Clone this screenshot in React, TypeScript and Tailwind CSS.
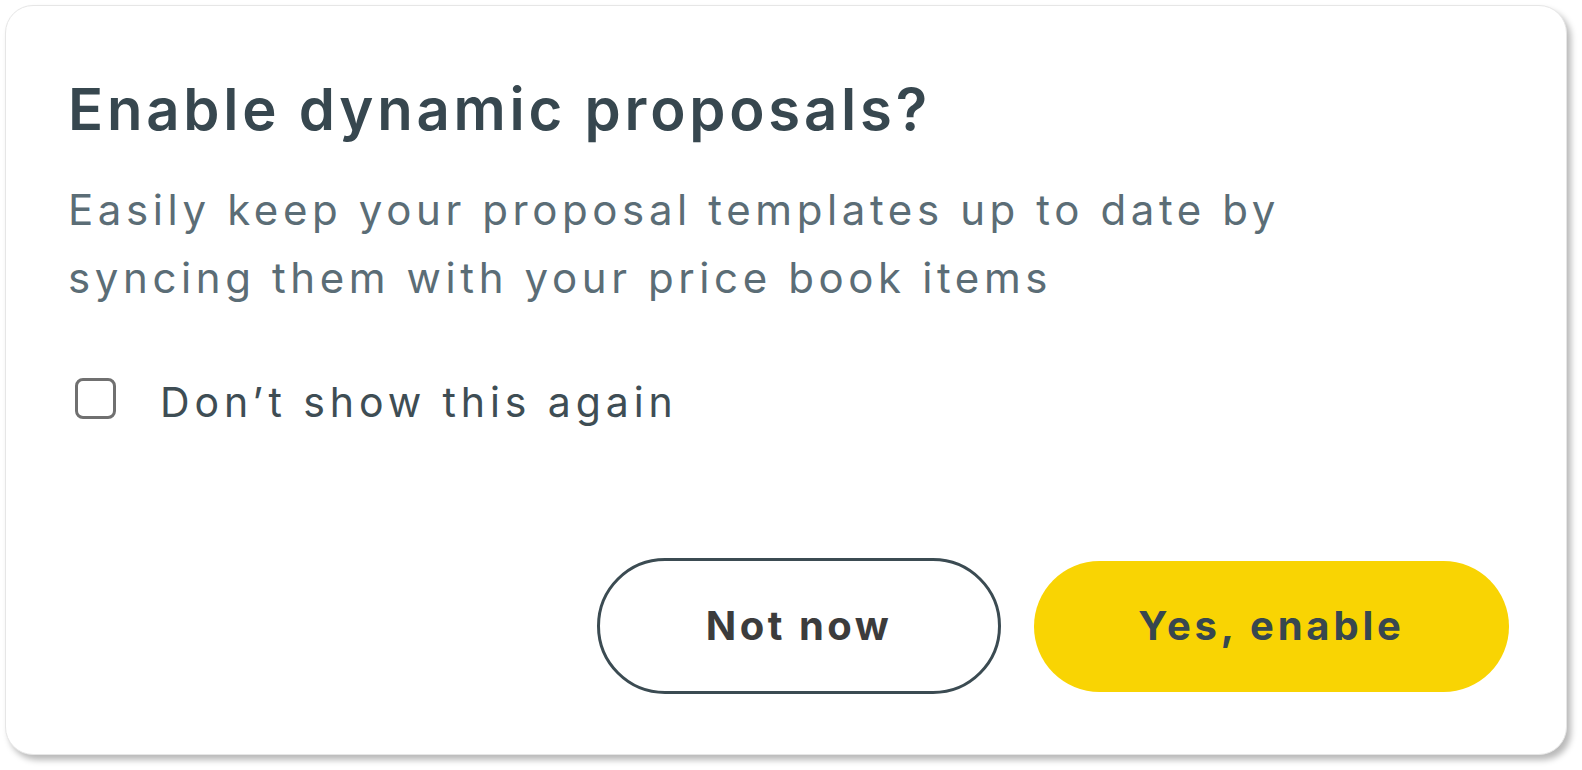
import React, { useState } from 'react';

export default function App() {
  const [dontShow, setDontShow] = useState(false);

  return (
    <div className="min-h-screen bg-white p-[5px]" style={{ fontFamily: 'Inter, "Noto Sans", sans-serif' }}>
      <div className="flex h-[750px] w-[1562px] flex-col rounded-[28px] border border-[#e6e6e6] bg-white pb-[60px] pl-[62px] pr-[57px] pt-[68px] shadow-[4px_5px_6px_rgba(0,0,0,0.28)]">
        <h1 className="text-[58px] font-semibold leading-[70px] tracking-[3.8px] text-[#37474f]">
          Enable dynamic proposals?
        </h1>

        <p className="mt-[32px] w-[1300px] text-[42px] leading-[68px] tracking-[4.6px] text-[#5b6d76]">
          Easily keep your proposal templates up to date by syncing them with your price book items
        </p>

        <label className="mt-[66px] flex cursor-pointer items-start gap-[44px] pl-[7px]">
          <button
            type="button"
            onClick={() => setDontShow(!dontShow)}
            className="h-[41px] w-[41px] shrink-0 rounded-[8px] border-[3px] border-[#707070] bg-white"
          />
          <span className="text-[41px] leading-[48px] tracking-[4.9px] text-[#3e4d54]">Don’t show this again</span>
        </label>

        <div className="mt-auto flex items-center justify-end gap-[33px]">
          <button
            type="button"
            className="flex h-[136px] w-[404px] items-center justify-center rounded-full border-[3px] border-[#3b4b52] bg-white text-[40px] font-bold tracking-[3.5px] text-[#3c3c3c]"
          >
            Not now
          </button>
          <button
            type="button"
            className="flex h-[131px] w-[475px] items-center justify-center rounded-full bg-[#f9d403] text-[40px] font-bold tracking-[3.8px] text-[#37474f]"
          >
            Yes, enable
          </button>
        </div>
      </div>
    </div>
  );
}
